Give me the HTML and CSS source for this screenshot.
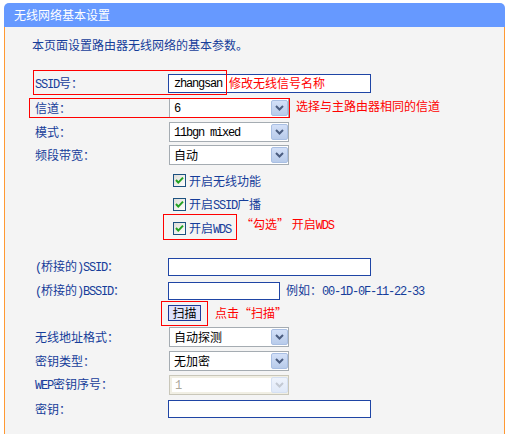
FILE: index.html
```html
<!DOCTYPE html>
<html lang="zh-CN">
<head>
<meta charset="utf-8">
<title>无线网络基本设置</title>
<link rel="stylesheet" href="styles.css">
</head>
<body>
<div class="panel">
  <div class="title">无线网络基本设置</div>
  <div class="content">
    <p class="intro">本页面设置路由器无线网络的基本参数。</p>

    <div class="row h25">
      <span class="label"><span class="en">SSID</span>号：</span>
      <div class="inp w203 tall"><span class="en">zhangsan</span></div>
    </div>

    <div class="row h24">
      <span class="label">信道：</span>
      <div class="sel"><span class="val"><span class="en">6</span></span><span class="arr"><svg width="15" height="14" viewBox="0 0 15 14"><path d="M4 5 L7.5 8.5 L11 5" fill="none" stroke="#4b5d80" stroke-width="2"/></svg></span></div>
    </div>

    <div class="row h24">
      <span class="label">模式：</span>
      <div class="sel"><span class="val"><span class="en">11bgn mixed</span></span><span class="arr"><svg width="15" height="14" viewBox="0 0 15 14"><path d="M4 5 L7.5 8.5 L11 5" fill="none" stroke="#4b5d80" stroke-width="2"/></svg></span></div>
    </div>

    <div class="row h22">
      <span class="label">频段带宽：</span>
      <div class="sel"><span class="val">自动</span><span class="arr"><svg width="15" height="14" viewBox="0 0 15 14"><path d="M4 5 L7.5 8.5 L11 5" fill="none" stroke="#4b5d80" stroke-width="2"/></svg></span></div>
    </div>

    <div class="row cbrow h26">
      <span class="label"></span>
      <div class="cbwrap m8">
        <svg class="cb" width="13" height="13" viewBox="0 0 13 13"><defs><linearGradient id="g1" x1="0" y1="0" x2="1" y2="1"><stop offset="0" stop-color="#dcdcd6"/><stop offset="1" stop-color="#ffffff"/></linearGradient></defs><rect x="0.5" y="0.5" width="12" height="12" fill="url(#g1)" stroke="#1c5180"/><path d="M3 6 L5.3 8.6 L10 3.6" fill="none" stroke="#21a121" stroke-width="2"/></svg>
        <span class="cbtext">开启无线功能</span>
      </div>
    </div>

    <div class="row cbrow h24">
      <span class="label"></span>
      <div class="cbwrap m6">
        <svg class="cb" width="13" height="13" viewBox="0 0 13 13"><rect x="0.5" y="0.5" width="12" height="12" fill="url(#g1)" stroke="#1c5180"/><path d="M3 6 L5.3 8.6 L10 3.6" fill="none" stroke="#21a121" stroke-width="2"/></svg>
        <span class="cbtext">开启<span class="en">SSID</span>广播</span>
      </div>
    </div>

    <div class="row cbrow h24">
      <span class="label"></span>
      <div class="cbwrap m6">
        <svg class="cb" width="13" height="13" viewBox="0 0 13 13"><rect x="0.5" y="0.5" width="12" height="12" fill="url(#g1)" stroke="#1c5180"/><path d="M3 6 L5.3 8.6 L10 3.6" fill="none" stroke="#21a121" stroke-width="2"/></svg>
        <span class="cbtext">开启<span class="en">WDS</span></span>
      </div>
    </div>

    <div class="spacer"></div>

    <div class="row h24">
      <span class="label"><span class="en">(</span>桥接的<span class="en">)SSID</span>：</span>
      <div class="inp w203"></div>
    </div>

    <div class="row h24">
      <span class="label"><span class="en">(</span>桥接的<span class="en">)BSSID</span>：</span>
      <div class="inp w112"></div>
      <span class="hint">例如：<span class="en">00-1D-0F-11-22-33</span></span>
    </div>

    <div class="row btnrow h22">
      <span class="label"></span>
      <div class="btn">扫描</div>
    </div>

    <div class="row h24">
      <span class="label">无线地址格式：</span>
      <div class="sel"><span class="val">自动探测</span><span class="arr"><svg width="15" height="14" viewBox="0 0 15 14"><path d="M4 5 L7.5 8.5 L11 5" fill="none" stroke="#4b5d80" stroke-width="2"/></svg></span></div>
    </div>

    <div class="row h24">
      <span class="label">密钥类型：</span>
      <div class="sel"><span class="val">无加密</span><span class="arr"><svg width="15" height="14" viewBox="0 0 15 14"><path d="M4 5 L7.5 8.5 L11 5" fill="none" stroke="#4b5d80" stroke-width="2"/></svg></span></div>
    </div>

    <div class="row h24">
      <span class="label"><span class="en">WEP</span>密钥序号：</span>
      <div class="sel disabled"><span class="val"><span class="en">1</span></span><span class="arr"><svg width="15" height="14" viewBox="0 0 15 14"><path d="M4 5 L7.5 8.5 L11 5" fill="none" stroke="#c3c9d3" stroke-width="2"/></svg></span></div>
    </div>

    <div class="row h24">
      <span class="label">密钥：</span>
      <div class="inp w203"></div>
    </div>
  </div>
</div>

<div class="rbox box-ssid"></div>
<div class="rbox box-chan"></div>
<div class="rbox box-wds"></div>
<div class="rbox box-scan"></div>

<div class="note note-ssid">修改无线信号名称</div>
<div class="note note-chan">选择与主路由器相同的信道</div>
<div class="note note-wds">“勾选” 开启<span class="en">WDS</span></div>
<div class="note note-scan">点击“扫描”</div>
</body>
</html>
```

FILE: styles.css
```css
* { box-sizing: border-box; }

body {
  margin: 0;
  background: #ffffff;
  font-family: "Noto Sans CJK SC", "Noto Sans", sans-serif;
  font-size: 12px;
  position: relative;
  height: 434px;
  overflow: hidden;
}

.en {
  font-family: "Liberation Mono", "DejaVu Sans Mono", monospace;
  font-size: 12px;
  letter-spacing: -1.2px;
}

.panel {
  margin: 3px 0 0 4px;
  width: 501px;
  height: 431px;
  display: flex;
  flex-direction: column;
}

.title {
  height: 24px;
  background: #6699ff;
  border-radius: 5px 5px 0 0;
  color: #ffffff;
  line-height: 24px;
  padding-left: 10px;
  font-size: 12px;
}

.content {
  flex: 1;
  background: #f4f4f4;
  border-left: 1px solid #ff9933;
  border-right: 1px solid #ff9933;
  padding-top: 10px;
}

.intro {
  margin: 0 0 18px 0;
  padding-left: 27px;
  line-height: 16px;
  color: #163d9a;
}

.row {
  display: flex;
  align-items: center;
  line-height: 16px;
}

.h22 { height: 22px; }
.h24 { height: 24px; }
.h25 { height: 25px; }
.h26 { height: 26px; }

.label {
  width: 163px;
  flex: none;
  padding-left: 30px;
  color: #163d9a;
  white-space: nowrap;
}

.inp {
  height: 18px;
  border: 1px solid #1f45a5;
  background: #ffffff;
  display: flex;
  align-items: center;
  padding-left: 5px;
  color: #000000;
}

.inp.tall { height: 19px; }
.w203 { width: 203px; }
.w112 { width: 112px; }

.sel {
  width: 120px;
  height: 20px;
  margin-left: 1px;
  border: 1px solid #a5acb2;
  background: #ffffff;
  display: flex;
  align-items: center;
}

.sel .val {
  flex: 1;
  padding-left: 4px;
  color: #000000;
  white-space: nowrap;
  overflow: hidden;
}

.sel .arr {
  width: 17px;
  height: 16px;
  flex: none;
  border: 1px solid #a9bfe3;
  border-radius: 2px;
  background: linear-gradient(#d3e0f8, #b8cbea);
  display: flex;
  align-items: center;
  justify-content: center;
}

.sel.disabled {
  border-color: #c9c7ba;
  background: #ffffff;
  box-shadow: inset 0 0 0 2px #f1efe4;
}

.sel.disabled .val { color: #aca899; padding-left: 5px; }

.sel.disabled .arr {
  border-color: #d5e0f2;
  background: linear-gradient(#eef3fc, #e0e9f8);
}

.cbrow { align-items: flex-start; }

.cbwrap {
  display: flex;
  align-items: center;
  height: 13px;
  margin-left: 5px;
}

.m8 { margin-top: 8px; }
.m6 { margin-top: 6px; }

.cb { display: block; flex: none; }

.cbtext {
  margin-left: 3px;
  line-height: 13px;
  color: #163d9a;
  white-space: nowrap;
}

.spacer { height: 15px; }

.hint {
  margin-left: 6px;
  color: #163d9a;
  white-space: nowrap;
}

.btnrow { align-items: flex-start; }

.btn {
  margin-top: 2px;
  width: 33px;
  height: 16px;
  border: 1px solid #1d3a9a;
  background: #dee2fb;
  color: #000000;
  text-align: center;
  line-height: 14px;
  font-size: 12px;
}

.rbox {
  position: absolute;
  border: 1px solid #ff0000;
}

.box-ssid { left: 33px; top: 70px; width: 194px; height: 25px; }
.box-chan { left: 29px; top: 98px; width: 261px; height: 20px; }
.box-wds { left: 163px; top: 214px; width: 74px; height: 26px; }
.box-scan { left: 161px; top: 301px; width: 47px; height: 25px; }

.note {
  position: absolute;
  color: #ff0000;
  line-height: 16px;
  white-space: nowrap;
}

.note-ssid { left: 229px; top: 75px; }
.note-chan { left: 296px; top: 98px; }
.note-wds { left: 241px; top: 216px; }
.note-scan { left: 215px; top: 305px; }
```
